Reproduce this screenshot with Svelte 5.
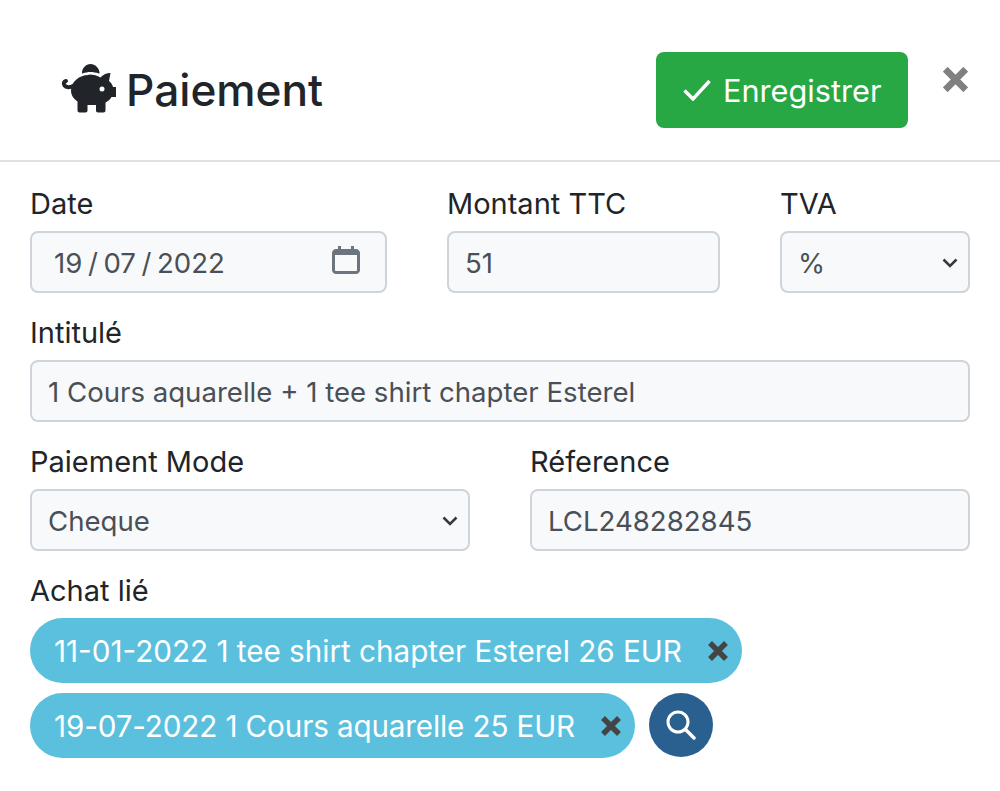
<script lang="ts">
    let purchases = [
        "11-01-2022 1 tee shirt chapter Esterel 26 EUR",
        "19-07-2022 1 Cours aquarelle 25 EUR",
    ];
</script>

<div class="modal">
    <header class="head">
        <h1 class="title">
            <svg class="piggy" viewBox="0 0 56 52" aria-hidden="true">
                <path fill="#212529" d="M21 12c0-5 4-9 8.500-9s9 4 9 9c0 .4-.3 .6-.6 .5C35 11.500 32 11 29.500 11s-5.500 .5-7.900 1.500C21.300 12.600 21 12.400 21 12z"/>
                <path fill="#212529" d="M28 13.500c4.500 0 8.500 1 11.500 3c2-2.500 6-4.500 10-4.500l-1.500 8c2 1.500 3.500 3.500 4 6h3v10h-4.500c-1 2-3 4-6 5.500v8c0 1-.8 2-2 2h-5.500c-1.200 0-2-1-2-2v-5.500h-8.500v5.500c0 1-.8 2-2 2h-6c-1.200 0-2-1-2-2v-9c-4.500-3-6.500-7-6.500-11c0-9 8.500-15.500 17.500-15.500z"/>
                <path fill="none" stroke="#212529" stroke-width="4" stroke-linecap="round" d="M12 25c-3 1.800-7 1.500-8.500-.5S3 20.500 5 20"/>
                <circle cx="41" cy="28" r="2.500" fill="#fff"/>
            </svg>
            Paiement
        </h1>
        <button class="save" type="button">
            <svg class="check" viewBox="0 0 28 22" aria-hidden="true">
                <path fill="none" stroke="#fff" stroke-width="3.400" d="M1.500 11.500l8.500 8.500L26.500 2"/>
            </svg>
            Enregistrer
        </button>
        <button class="close" type="button" aria-label="Fermer">
            <svg viewBox="0 0 28 28" aria-hidden="true">
                <path fill="none" stroke="#808080" stroke-width="7.600" d="M2.500 2.500l23 23M25.500 2.500l-23 23"/>
            </svg>
        </button>
    </header>

    <form class="body">
        <div class="row first">
            <label class="field date">
                <span>Date</span>
                <div class="control">
                    <input class="input dateinput" value="19 / 07 / 2022" />
                    <svg class="cal" viewBox="0 0 28 28" aria-hidden="true">
                        <path fill="#6c757d" fill-rule="evenodd" d="M6 0h3v3h10V0h3v3h2c2.200 0 4 1.800 4 4v17c0 2.200-1.800 4-4 4H4c-2.200 0-4-1.800-4-4V7c0-2.200 1.800-4 4-4h2zM3 9v15c0 .6 .4 1 1 1h20c.6 0 1-.4 1-1V9z"/>
                    </svg>
                </div>
            </label>
            <label class="field amount">
                <span>Montant TTC</span>
                <input class="input" value="51" />
            </label>
            <label class="field vat">
                <span>TVA</span>
                <div class="control">
                    <select class="input">
                        <option>%</option>
                    </select>
                    <svg class="chev" viewBox="0 0 16 10" aria-hidden="true">
                        <path fill="none" stroke="#343a40" stroke-width="2.500" d="M1.500 1.500L8 8l6.500-6.500"/>
                    </svg>
                </div>
            </label>
        </div>

        <div class="row">
            <label class="field full">
                <span>Intitulé</span>
                <input class="input" value="1 Cours aquarelle + 1 tee shirt chapter Esterel" />
            </label>
        </div>

        <div class="row">
            <label class="field half">
                <span>Paiement Mode</span>
                <div class="control">
                    <select class="input">
                        <option>Cheque</option>
                    </select>
                    <svg class="chev" viewBox="0 0 16 10" aria-hidden="true">
                        <path fill="none" stroke="#343a40" stroke-width="2.500" d="M1.500 1.500L8 8l6.500-6.500"/>
                    </svg>
                </div>
            </label>
            <label class="field half">
                <span>Réference</span>
                <input class="input" value="LCL248282845" />
            </label>
        </div>

        <div class="linked">
            <div class="linked-label">Achat lié</div>
            <div class="pills">
                {#each purchases as item}
                    <div class="pill">
                        <span>{item}</span>
                        <svg class="pill-x" viewBox="0 0 20 20" aria-hidden="true">
                            <path fill="none" stroke="#444" stroke-width="5.500" d="M2 2l16 16M18 2L2 18"/>
                        </svg>
                    </div>
                {/each}
                <button class="search" type="button" aria-label="Rechercher">
                    <svg viewBox="0 0 30 30" aria-hidden="true">
                        <circle cx="12" cy="12" r="10" fill="none" stroke="#fff" stroke-width="3"/>
                        <path fill="none" stroke="#fff" stroke-width="3.400" stroke-linecap="round" d="M19.500 19.500L28 28"/>
                    </svg>
                </button>
            </div>
        </div>
    </form>
</div>

<style>
    :global(body) {
        margin: 0;
        background: #fff;
    }

    .modal {
        width: 1000px;
        height: 791px;
        font-family: Inter, "Liberation Sans", sans-serif;
        font-size: 29px;
        color: #212529;
        overflow: hidden;
    }

    .head {
        display: flex;
        align-items: flex-start;
        padding: 52px 30px 0 61px;
        height: 108px;
        border-bottom: 2px solid #dee2e6;
    }

    .title {
        display: flex;
        align-items: center;
        gap: 9px;
        margin: 8px auto 0 0;
        font-size: 44.200px;
        font-weight: 520;
        line-height: 60px;
    }

    .piggy {
        width: 56px;
        height: 52px;
        margin-top: -6px;
    }

    .save {
        display: flex;
        align-items: center;
        gap: 12px;
        width: 252px;
        height: 76px;
        padding: 0 0 0 27px;
        background: #28a745;
        border: 0;
        border-radius: 8px;
        color: #fff;
        font: inherit;
        font-size: 30.700px;
        box-sizing: border-box;
    }

    .check {
        width: 28px;
        height: 22px;
    }

    .close {
        width: 25px;
        height: 25px;
        margin: 15px 2px 0 35px;
        padding: 0;
        background: none;
        border: 0;
    }

    .close svg {
        display: block;
        width: 25px;
        height: 25px;
    }

    .body {
        padding: 0 30px;
    }

    .row {
        display: flex;
        gap: 60px;
    }

    .row + .row {
        margin-top: 19px;
    }

    .first {
        margin-top: 21px;
    }

    .field {
        display: flex;
        flex-direction: column;
        gap: 8px;
        line-height: 42px;
    }

    .field > span {
        height: 42px;
        margin-bottom: -2px;
    }

    .date {
        width: 357px;
    }

    .amount {
        width: 273px;
    }

    .vat {
        width: 190px;
    }

    .full {
        width: 100%;
    }

    .half {
        width: 440px;
    }

    .control {
        position: relative;
    }

    .input {
        display: block;
        width: 100%;
        height: 62px;
        padding: 2px 16px 0;
        box-sizing: border-box;
        background: #f8f9fa;
        border: 2px solid #ced4da;
        border-radius: 8px;
        color: #495057;
        font: inherit;
        font-size: 27.600px;
        appearance: none;
        outline: none;
    }

    .dateinput {
        padding-left: 22px;
        word-spacing: -2.200px;
    }

    .cal {
        position: absolute;
        top: 15px;
        right: 27px;
        width: 28px;
        height: 28px;
        pointer-events: none;
    }

    .chev {
        position: absolute;
        top: 27px;
        right: 12px;
        width: 16px;
        height: 10px;
        pointer-events: none;
    }

    .linked {
        margin-top: 19px;
    }

    .linked-label {
        line-height: 42px;
        margin-bottom: 6px;
    }

    .pills {
        display: flex;
        flex-wrap: wrap;
        gap: 10px 14px;
        width: 760px;
    }

    .pill {
        display: flex;
        align-items: center;
        justify-content: space-between;
        gap: 26px;
        height: 65px;
        padding: 0 14px 0 24px;
        background: #5bc0de;
        border-radius: 33px;
        color: #fff;
        font-size: 29.650px;
        box-sizing: border-box;
    }

    .pill:nth-child(2) {
        letter-spacing: -0.130px;
    }

    .pill-x {
        width: 20px;
        height: 20px;
    }

    .search {
        display: flex;
        align-items: center;
        justify-content: center;
        width: 64px;
        height: 64px;
        padding: 0;
        background: #2a6090;
        border: 0;
        border-radius: 50%;
    }

    .search svg {
        width: 30px;
        height: 30px;
    }
</style>
